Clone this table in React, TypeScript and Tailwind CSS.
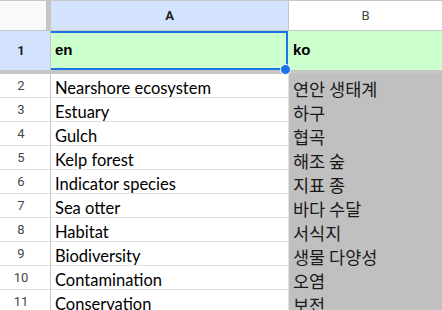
import React from "react";

const rows: [string, string][] = [
  ["Nearshore ecosystem", "연안 생태계"],
  ["Estuary", "하구"],
  ["Gulch", "협곡"],
  ["Kelp forest", "해조 숲"],
  ["Indicator species", "지표 종"],
  ["Sea otter", "바다 수달"],
  ["Habitat", "서식지"],
  ["Biodiversity", "생물 다양성"],
  ["Contamination", "오염"],
  ["Conservation", "보전"],
];

const hdrFont = { fontFamily: "Roboto, 'Liberation Sans', Arial, sans-serif" };
const enFont = { fontFamily: "Lato, 'Open Sans', sans-serif" };
const koFont = { fontFamily: "'Noto Sans CJK KR', 'Noto Sans', sans-serif" };

export default function App() {
  return (
    <div className="w-[442px] h-[310px] overflow-hidden bg-white">
      {/* column header row */}
      <div className="flex h-[31px] border-t border-b border-[#c4c7c5]" style={hdrFont}>
        <div className="w-[46px] bg-[#f8f9fa]" />
        <div className="w-[5px] bg-[#c4c7c5]" />
        <div className="w-[238px] border-r border-[#c4c7c5] bg-[#d3e3fd] flex items-center justify-center text-[13px] font-bold text-[#1f1f1f]">
          A
        </div>
        <div className="flex-1 bg-white flex items-center justify-center text-[13px] text-[#444746]">
          B
        </div>
      </div>

      {/* row 1 */}
      <div className="flex h-[39px]">
        <div
          className="w-[51px] border-r border-[#c4c7c5] bg-[#d3e3fd] flex items-center justify-center pr-[8px] text-[13px] font-bold text-[#1f1f1f]"
          style={hdrFont}
        >
          1
        </div>
        <div
          className="relative w-[238px] bg-[#ccffcc] flex items-center pl-[4px] text-[15px] font-bold text-black"
          style={{ fontFamily: "'Liberation Sans', Arial, sans-serif" }}
        >
          en
          <div className="absolute top-0 bottom-0 left-0 right-[1px] border-t-2 border-r-2 border-b-2 border-[#1a73e8]" />
          <div className="absolute z-10 left-[229px] top-[33px] w-[11px] h-[11px] rounded-full bg-[#1a73e8] border border-white" />
        </div>
        <div
          className="flex-1 bg-[#ccffcc] flex items-center pl-[4px] text-[15px] font-bold text-black"
          style={{ fontFamily: "'Liberation Sans', Arial, sans-serif" }}
        >
          ko
        </div>
      </div>

      {/* freeze bar */}
      <div className="h-[4px] bg-[#c4c7c5]" />

      {rows.map(([en, ko], i) => (
        <div key={i} className="flex h-[24px]">
          <div
            className="w-[51px] border-r border-r-[#c4c7c5] border-b border-b-[#e1e1e1] flex items-center justify-center pr-[8px] text-[13px] text-[#444746]"
            style={hdrFont}
          >
            {i + 2}
          </div>
          <div
            className="w-[238px] border-r border-b border-[#e1e1e1] flex items-end pl-[4px] pb-[1px] text-[16.5px] leading-[16px] text-black whitespace-nowrap"
            style={enFont}
          >
            {en}
          </div>
          <div
            className="flex-1 bg-[#c0c0c0] flex items-end pl-[4px] text-[17.5px] leading-[18px] text-[#1a1a1a] whitespace-nowrap"
            style={koFont}
          >
            {ko}
          </div>
        </div>
      ))}
    </div>
  );
}
